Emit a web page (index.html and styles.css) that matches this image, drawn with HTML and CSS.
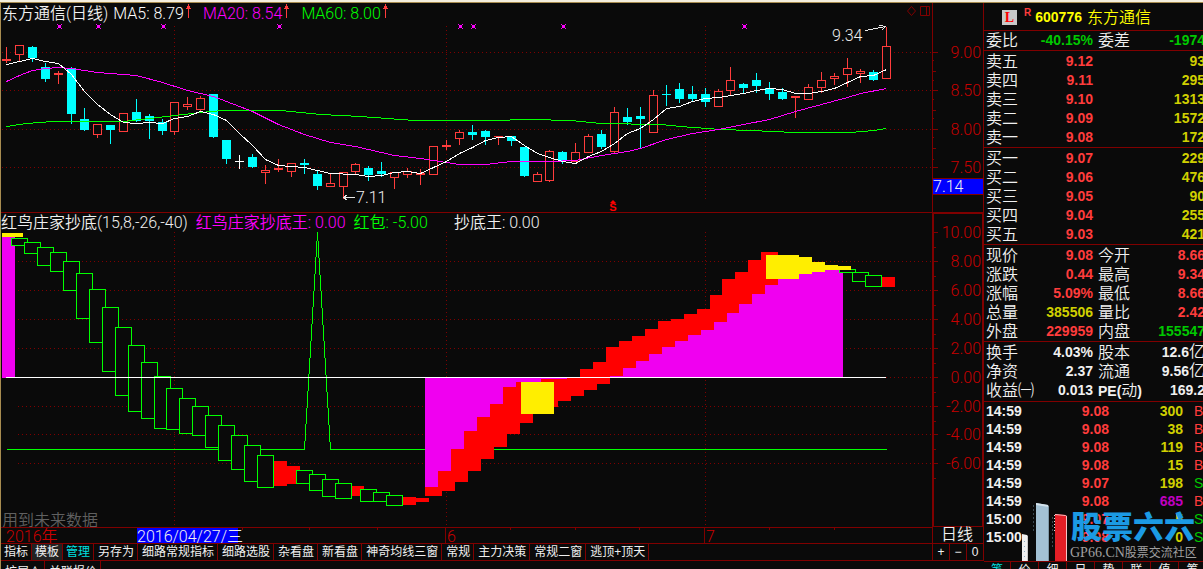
FILE: index.html
```html
<!DOCTYPE html>
<html lang="zh-CN">
<head>
<meta charset="utf-8">
<title>东方通信 600776</title>
<link rel="stylesheet" href="styles.css">
</head>
<body>
<div class="topstrip"></div>
<div class="workspace">
  <main class="charts">
    <section class="panel panel-price">
      <div class="plot">
        <header class="legend">
          <span class="legend-title">东方通信(日线)</span>
          <span class="white">MA5: 8.79<svg class="up" viewBox="0 0 7 16"><path d="M3 0h1v2h1v2h1v1H4v9H3V5H1V4h1V2h1z"/></svg></span>
          <span class="magenta">MA20: 8.54<svg class="up" viewBox="0 0 7 16"><path d="M3 0h1v2h1v2h1v1H4v9H3V5H1V4h1V2h1z"/></svg></span>
          <span class="green">MA60: 8.00<svg class="up" viewBox="0 0 7 16"><path d="M3 0h1v2h1v2h1v1H4v9H3V5H1V4h1V2h1z"/></svg></span>
          <svg class="tools" viewBox="0 0 24 12"><path d="M5.500 1.500l4 4.500-4 4.500-4-4.500zM14.500 1.500h9v9h-9zM20.500 1.500v9"/></svg>
        </header>
        <svg id="price" class="price" viewBox="1 23 931 189" preserveAspectRatio="none"></svg>
      </div>
      <svg id="price-axis" class="price-axis" viewBox="932 3 52 209"></svg>
    </section>
    <section class="panel panel-ind">
      <div class="plot">
        <header class="legend legend-ind">
          <span>红鸟庄家抄底(15,8,-26,-40)</span>
          <span class="magenta">红鸟庄家抄底王: 0.00</span>
          <span class="green">红包: -5.00</span>
          <span class="last">抄底王: 0.00</span>
        </header>
        <svg id="ind" class="ind" viewBox="1 232 931 295" preserveAspectRatio="none"></svg>
      </div>
      <svg id="ind-axis" class="ind-axis" viewBox="932 213 52 314"></svg>
    </section>
    <section class="panel panel-date">
      <svg id="dates" class="dates" viewBox="1 527 931 16" preserveAspectRatio="none"></svg>
      <button class="period">日线</button>
    </section>
    <section class="panel panel-tabs">
      <nav class="tabs">
        <button class="slim">指标</button><button class="slim on">模板</button><button class="slim cyan">管理</button><button>另存为</button><button>细路常规指标</button><button>细路选股</button><button>杂看盘</button><button>新看盘</button><button>神奇均线三窗</button><button>常规</button><button>主力决策</button><button>常规二窗</button><button>逃顶+顶天</button>
      </nav>
      <div class="zoomers"><button>+</button><button>−</button><button>0</button></div>
    </section>
    <nav class="tabs tabs-low"><button>扩展∧</button><button>关联报价</button></nav>
  </main>

  <aside class="side">
    <header class="stock">
      <span class="badge">L</span><span class="mark">R</span><b>600776</b><span>东方通信</span>
    </header>
    <table class="stats tight">
      <colgroup><col class="c1"><col class="c2"><col class="c3"><col></colgroup>
      <tr><th>委比</th><td class="gr">-40.15%</td><th>委差</th><td class="gr">-1974</td></tr>
    </table>
    <table class="book">
      <colgroup><col class="c1"><col class="c2"><col></colgroup>
      <tr><th>卖五</th><td class="rd">9.12</td><td class="yl">93</td></tr>
      <tr><th>卖四</th><td class="rd">9.11</td><td class="yl">295</td></tr>
      <tr><th>卖三</th><td class="rd">9.10</td><td class="yl">1313</td></tr>
      <tr><th>卖二</th><td class="rd">9.09</td><td class="yl">1572</td></tr>
      <tr><th>卖一</th><td class="rd">9.08</td><td class="yl">172</td></tr>
    </table>
    <table class="book">
      <colgroup><col class="c1"><col class="c2"><col></colgroup>
      <tr><th>买一</th><td class="rd">9.07</td><td class="yl">229</td></tr>
      <tr><th>买二</th><td class="rd">9.06</td><td class="yl">476</td></tr>
      <tr><th>买三</th><td class="rd">9.05</td><td class="yl">90</td></tr>
      <tr><th>买四</th><td class="rd">9.04</td><td class="yl">255</td></tr>
      <tr><th>买五</th><td class="rd">9.03</td><td class="yl">421</td></tr>
    </table>
    <table class="stats">
      <colgroup><col class="c1"><col class="c2"><col class="c3"><col></colgroup>
      <tr><th>现价</th><td class="rd">9.08</td><th>今开</th><td class="rd">8.66</td></tr>
      <tr><th>涨跌</th><td class="rd">0.44</td><th>最高</th><td class="rd">9.34</td></tr>
      <tr><th>涨幅</th><td class="rd">5.09%</td><th>最低</th><td class="rd">8.66</td></tr>
      <tr><th>总量</th><td class="yl">385506</td><th>量比</th><td class="rd">2.42</td></tr>
      <tr><th>外盘</th><td class="rd">229959</td><th>内盘</th><td class="gr">155547</td></tr>
    </table>
    <table class="stats roomy">
      <colgroup><col class="c1"><col class="c2"><col class="c3"><col></colgroup>
      <tr><th>换手</th><td>4.03%</td><th>股本</th><td>12.6<span class="cn">亿</span></td></tr>
      <tr><th>净资</th><td>2.37</td><th>流通</th><td>9.56<span class="cn">亿</span></td></tr>
      <tr><th>收益㈠</th><td>0.013</td><th><b class="pe">PE(</b>动<b class="pe">)</b></th><td>169.2</td></tr>
    </table>
    <div class="tape">
      <table class="trades">
        <colgroup><col class="t1"><col class="t2"><col class="t3"><col></colgroup>
        <tr><td>14:59</td><td class="rd">9.08</td><td class="yl">300</td><td class="rd">B</td></tr>
        <tr><td>14:59</td><td class="rd">9.08</td><td class="yl">38</td><td class="rd">B</td></tr>
        <tr><td>14:59</td><td class="rd">9.08</td><td class="yl">119</td><td class="rd">B</td></tr>
        <tr><td>14:59</td><td class="rd">9.08</td><td class="yl">15</td><td class="rd">B</td></tr>
        <tr><td>14:59</td><td class="rd">9.07</td><td class="yl">198</td><td class="gr">S</td></tr>
        <tr><td>14:59</td><td class="rd">9.08</td><td class="pp">685</td><td class="rd">B</td></tr>
        <tr><td>15:00</td><td class="rd">9.07</td><td class="yl">5</td><td class="gr">S</td></tr>
        <tr><td>15:00</td><td class="rd">9.08</td><td class="yl">0</td><td class="gr">S</td></tr>
      </table>
      <div class="brand">
        <svg class="brand-bars" viewBox="0 0 46 58">
          <path fill="#f0f0f0" d="M0 31l5 1v26H0z"/><path fill="#c9c9c9" d="M5 32l1 1v25H5z"/>
          <path fill="#a3c1d4" d="M14 0l12 2v56H14z"/><path fill="#d5e3ec" d="M14 0l12 2 1 2-13-2z"/><path fill="#7d98a8" d="M26 3l1 1v54h-1z"/>
          <path fill="#e31e26" d="M33 11l11 1v46H33z"/><path fill="#f7c3c5" d="M33 11l10 1 2 1v45h-1V13l-11-1z"/>
          <path stroke="#3c4a52" stroke-dasharray="2 2" d="M11.500 2v28M30.500 14v30"/><path stroke="#ddd" stroke-dasharray="1 2" d="M32.500 12v18"/>
          <path stroke="#8fb0c4" stroke-dasharray="1 4" d="M2.500 38v16"/>
        </svg>
        <div class="brand-text"><div class="brand-name">股票六六</div><div class="brand-url">GP66.CN<span>股票交流社区</span></div></div>
      </div>
    </div>
    <nav class="side-tabs"><button class="cyan">笔</button><button>价</button><button>细</button><button>日</button><button>势</button><button>联</button><button>值</button><button>筹</button></nav>
  </aside>
</div>
<script src="chart.js"></script>
</body>
</html>
```
FILE: styles.css
```css
* { box-sizing: border-box; }
html, body { height: 100%; margin: 0; }
body {
  overflow: hidden;
  background: #0a0a0a;
  color: #f0f0f0;
  font-family: "Liberation Sans", "Noto Sans CJK SC", sans-serif;
  font-size: 16px;
  line-height: 19px;
}
svg { display: block; }
button {
  margin: 0; padding: 0; border: 0; background: none; color: inherit;
  font: inherit; white-space: nowrap;
}
.topstrip { height: 3px; background: #f4efdf; border-bottom: 1px solid #a88c50; }
.workspace {
  display: grid;
  grid-template-columns: minmax(0, 1fr) 222px;
  margin-right: -3px;
  border-left: 1px solid #a88c50;
}

/* charts */
.panel { display: grid; grid-template-columns: minmax(0, 1fr) 52px; }
.plot { min-width: 0; }
.legend, svg text { font-family: Roboto, "Noto Sans CJK SC", sans-serif; font-weight: 350; }
.legend { display: flex; gap: 11px; height: 20px; padding: 1px 0 0 1px; white-space: nowrap; }
.legend span { display: flex; }
.legend .legend-title { margin-right: -6px; }
.legend-ind { gap: 8px; height: 19px; padding: 0; }
.legend-ind .last { margin-left: 18px; }
.up { width: 7px; height: 16px; margin-left: 1px; fill: #ff3c3c; }
.tools { width: 24px; height: 12px; margin: 1px 2px 0 auto; fill: none; stroke: #800000; }
.magenta { color: #f0f; }
.green { color: #0f0; }
.white { color: #fff; }
.price { width: 100%; height: 189px; }
.price-axis { width: 52px; height: 209px; }
.panel-ind { border-top: 1px solid #800000; }
.ind { width: 100%; height: 295px; }
.ind-axis { width: 52px; height: 314px; }
.dates { width: 100%; height: 16px; }
.period {
  height: 16px; line-height: 16px; padding-right: 2px; font-weight: 350;
  border: solid #800000; border-width: 0 1px;
}

.tabs, .zoomers {
  display: flex; height: 18px; border: solid #800000; border-width: 1px 0;
  font-size: 12px; line-height: 15px;
}
.tabs button { padding: 1px 3px 0 4px; border-right: 1px solid #800000; }
.tabs .slim { padding: 1px 3px 0; }
.tabs .on { background: #222; }
.tabs .cyan, .side-tabs .cyan { color: #00e0e0; }
.tabs-low { border-top: 0; }
.tabs-low button { line-height: 20px; }
.zoomers { border-left: 1px solid #800000; border-right: 1px solid #800000; }
.zoomers button { flex: 1; }
.zoomers button + button { border-left: 1px solid #800000; }

/* svg text */
svg text { font-size: 16px; fill: #f0f0f0; }
svg .axis-label, svg .year { fill: #c80000; }
svg .axis-label { text-anchor: end; }
svg .hint { fill: #606060; }
svg .signal { font: bold 11px "Liberation Sans", sans-serif; fill: #f00; text-anchor: middle; }

/* quote panel */
.side { white-space: nowrap; }
.stock {
  display: flex; align-items: center; height: 28px; padding: 1px 0 0 18px;
  border-bottom: 1px solid #800000; color: #ff0; font-weight: 350;
}
.badge {
  width: 15px; height: 15px; background: #c8c8c8; color: #f00; text-align: center;
  font: bold 14px/15px "Liberation Serif", serif;
}
.mark { margin: 0 4px 8px 7px; color: #ff3c3c; font-size: 10px; font-weight: bold; line-height: 12px; }
.stock b { margin-right: 5px; font-size: 14px; }
table {
  width: 100%; table-layout: fixed; border-collapse: separate; border-spacing: 0;
  border-bottom: 1px solid #800000; padding: 1px 1px 0 2px;
}
table.tight { padding-top: 0; }
table.roomy { padding-bottom: 1px; }
th, td { height: 19px; padding: 0; line-height: 19px; }
th { font-weight: 350; text-align: left; }
td { font-size: 14px; font-weight: bold; text-align: right; }
.c1 { width: 32px; }
.c2 { width: 75px; }
.c3 { width: 37px; }
.stats th + td + th { padding-left: 5px; }
.cn { font-size: 16px; font-weight: 350; line-height: 1px; }
.pe { font-size: 14px; font-weight: bold; line-height: 1px; }
.rd { color: #ff3c3c; }
.gr { color: #00c800; }
.yl { color: #d0d000; }
.pp { color: #c000c0; }
.tape { position: relative; padding-bottom: 15px; border-bottom: 1px solid #800000; }
.trades { border: 0; padding: 0 0 0 2px; }
.trades td { height: 18px; line-height: 18px; }
.trades td:first-child { text-align: left; }
.trades td:last-child { padding-left: 11px; text-align: left; font-weight: normal; }
.t1 { width: 60px; }
.t2 { width: 63px; }
.t3 { width: 74px; }
.brand { position: absolute; left: 38px; bottom: 0; display: flex; align-items: flex-end; }
.brand-bars { width: 46px; height: 58px; }
.brand-name { margin-left: 3px; color: #1b9ae4; font-size: 31px; font-weight: 900; line-height: 32px; }
.brand-url { margin-left: 2px; color: #a0a0a0; font: 14px/17px "Liberation Serif", serif; }
.brand-url span { font: 12px/12px "Noto Sans CJK SC", sans-serif; }
.side-tabs { display: flex; font-size: 12px; line-height: 17px; }
.side-tabs button { width: 28px; flex: none; border-right: 1px solid #800000; }
.side-tabs button:first-child { width: 27px; }
```
FILE: chart.js
```js
const RED = '#ff3c3c', CYAN = '#00ffff', LINE = '#800000', BG = '#0a0a0a';
const rect = (x, y, w, h, f) => `<rect x="${x}" y="${y}" width="${w}" height="${h}" fill="${f}"/>`;
const box = (x, y, w, h, s, f) => rect(x, y, w + 1, h + 1, s) + rect(x + 1, y + 1, w - 1, h - 1, f);
const crisp = s => `<g shape-rendering="crispEdges">${s}</g>`;
const stroke = (pts, c) =>
  `<polyline transform="translate(.5 .5)" points="${pts}" fill="none" stroke="${c}" shape-rendering="crispEdges"/>`;
const text = (x, y, t, c = '') => `<text x="${x}" y="${y}" class="${c}">${t}</text>`;
const hdots = (y, x1, x2) => `<path d="M${x1} ${y}.5H${x2}" stroke="${LINE}" stroke-dasharray="1 3"/>`;
const vdots = (x, y1, y2) => `<path d="M${x}.5 ${y1}V${y2}" stroke="${LINE}" stroke-dasharray="1 3"/>`;
const put = (id, s) => { document.getElementById(id).innerHTML = s; };

/* x, colour, body top, body bottom, high, low */
const candles = `6 R 59 60 47 62|19 r 45 54 45 61|32 c 47 57 46 61|45 c 67 78 63 81|58 R 73 74 71 83|71 c 68 113 67 123
84 c 119 129 108 130|97 r 124 134 124 137|110 c 125 129 125 143|123 r 113 131 113 131|136 c 112 120 99 121|149 c 116 120 114 138
162 c 122 130 119 134|174 r 102 131 102 134|187 r 104 106 97 109|200 r 98 109 96 110|213 c 94 136 94 137|226 c 140 158 140 163
239 w 161 161 155 168|252 c 157 166 154 167|265 r 170 172 165 183|278 R 168 169 159 171|291 r 163 171 163 176|304 c 163 164 159 173
317 c 174 185 171 189|330 r 183 186 173 186|343 r 172 186 172 198|355 r 164 171 163 173|368 c 168 174 166 180|381 c 171 173 162 176
394 r 172 177 172 188|407 r 171 174 168 177|420 R 173 174 169 184|433 r 146 174 146 174|446 R 145 146 140 149|459 r 132 138 130 144
472 c 132 134 125 139|485 c 131 136 130 144|498 R 136 136 136 144|511 c 136 140 136 145|524 c 147 175 147 176|537 r 174 181 172 181
549 r 151 180 150 181|562 c 152 160 151 163|575 r 152 161 143 161|588 r 136 152 134 152|601 c 134 146 130 148|614 r 112 151 107 153
627 c 117 121 108 124|640 c 116 118 107 148|653 r 95 132 90 132|666 c 94 94 85 105|679 c 89 98 83 102|692 c 94 98 86 101
705 c 94 101 88 106|718 r 91 106 89 106|730 r 80 90 67 95|743 c 84 87 83 92|756 c 80 85 73 92|769 c 88 93 82 99
782 c 92 98 88 99|795 R 96 97 96 117|808 r 87 99 84 99|821 r 80 87 72 92|834 r 76 78 73 84|847 r 68 74 58 86
860 r 71 73 69 82|873 c 72 79 70 80|886 r 46 78 27 78`.split(/[|\n]/).map(s => s.trim().split(' '));

let s = '';
[52, 90, 129, 167].forEach(y => { s += hdots(y, 2, 932); });
[174, 446, 705].forEach(x => { s += vdots(x, 26, 200); });
candles.forEach(([x, k, t, b, h, l]) => {
  [x, t, b, h, l] = [x, t, b, h, l].map(Number);
  const c = k === 'c' ? CYAN : k === 'w' ? '#fff' : RED;
  s += rect(x, h, 1, l - h + 1, c);
  s += k === 'r' ? box(x - 4, t, 8, b - t, c, BG) : rect(x - 4, t, 9, b - t + 1, c);
});
[59, 98, 163, 279, 460, 473, 563, 744].forEach(x => {
  s += rect(x - 1, 25, 3, 3, '#f0f');
  [[-2, 24], [2, 24], [-2, 28], [2, 28]].forEach(([d, y]) => { s += rect(x + d, y, 1, 1, '#f0f'); });
});
s = crisp(s);
s += stroke('6,126 26,123 52,121 123,121 149,118 200,112 222,110 280,110 320,114 360,116 414,120 490,120 530,119 570,120 600,123 660,124 680,126 720,129 750,130 795,132 850,132 873,130 886,128', '#0f0');
s += stroke('6,81 19,75 32,70 45,68 58,67 71,68 97,72 136,75 162,82 187,90 213,96 226,101 252,111 278,124 304,134 330,142 355,146 394,155 420,158 446,162 459,164 485,164 511,161 549,161 575,160 601,155 627,151 640,148 666,139 692,133 718,129 743,124 769,119 795,111 821,104 847,97 860,93 886,88', '#f0f');
s += stroke('6,64 32,58 45,61 58,63 71,74 84,91 97,104 110,114 123,122 136,123 149,122 162,123 174,118 187,116 200,111 213,114 226,120 239,133 252,145 265,159 278,165 304,167 317,170 330,173 355,174 368,176 381,175 394,172 407,171 420,173 433,167 446,161 459,153 472,147 485,140 498,137 511,136 524,145 537,153 549,157 562,161 575,163 588,156 601,151 614,143 627,133 640,128 653,119 666,108 679,106 692,101 705,98 718,97 743,93 756,90 769,88 782,89 795,93 808,93 821,91 834,88 847,82 860,76 873,75 886,69', '#fff');
s += stroke('354,197 343,197', '#e8e8e8') + stroke('347,194 343,197 347,200', '#e8e8e8') + text(356, 203, '7.11');
s += stroke('865,30 885,26', '#e8e8e8') + stroke('879,25 885,26 881,30', '#e8e8e8') + text(832, 41, '9.34');
s += `<path d="M610 203l3-3 3 3z" fill="#f00"/>` + text(613, 211, 'S', 'signal');
put('price', s);

s = rect(932, 3, 1, 209, LINE) + rect(983, 3, 1, 209, LINE);
[52, 90, 129, 167].forEach(y => { s += rect(933, y, 5, 1, LINE); });
[71, 110, 148].forEach(y => { s += rect(933, y, 3, 1, LINE); });
[60, 80, 99, 118, 137, 159].forEach(y => { s += rect(933, y, 1, 1, LINE); });
s += rect(933, 178, 50, 17, LINE) + rect(933, 179, 50, 15, '#00f');
s = crisp(s);
[['9.00', 58], ['8.50', 96], ['8.00', 135], ['7.50', 173]].forEach(([t, y]) => { s += text(981, y, t, 'axis-label'); });
put('price-axis', s + text(933, 192, '7.14'));

/* indicator pane */
s = '';
[261, 290, 319, 348, 377, 406, 434, 463].forEach(y => { s += hdots(y, 18, 932); });
[174, 446, 705].forEach(x => { s += vdots(x, 232, 525); });
s = crisp(s) + stroke('6,449 304,449 317,232 330,449 886,449', '#0f0');
let g = rect(2, 237, 13, 141, '#f000f0');
/* each entry: g = outlined box x top bottom, r = solid x1 x2 top bottom */
const steps = `g 11 238 245|g 24 242 253|g 37 247 265|g 50 252 271|g 63 261 290|g 76 273 318|g 89 289 342|g 102 307 371|g 115 327 395
g 128 345 411|g 141 362 418|g 154 376 428|g 166 388 429|g 179 398 433|g 192 406 435|g 205 415 447|g 218 425 460|g 231 435 469
g 244 445 481|g 257 455 487|r 274 287 461 486|r 287 300 466 484|g 296 470 483|g 309 474 490|g 322 479 496|g 335 483 498
r 352 364 486 496|g 360 489 501|g 373 492 501|g 386 495 505|r 403 416 497 505|r 416 429 498 502`.split(/[|\n]/);
const draw = list => list.forEach(e => {
  const [k, ...n] = e.trim().split(' ');
  const v = n.map(Number);
  g += k === 'g' ? box(v[0], v[1], 16, v[2] - v[1], '#0f0', BG) : rect(v[0], v[2], v[1] - v[0], v[3] - v[2], '#f00');
});
draw(steps);
g += rect(2, 233, 21, 4, '#ffee00');
/* red band below zero, then above zero: x1 x2 top bottom */
draw(`r 425 442 480 496|r 438 455 471 491|r 451 468 449 482|r 464 481 431 471|r 477 494 417 459|r 490 507 404 447|r 503 520 387 434
r 516 533 382 423|r 533 558 379 407|r 555 571 378 401|r 567 584 378 396|r 580 597 369 390|r 593 610 362 384|r 606 623 347 378
r 619 636 341 378|r 632 649 336 378|r 645 662 329 378|r 658 675 321 378|r 671 688 319 378|r 684 701 314 378|r 697 714 309 378
r 710 726 295 378|r 722 739 279 378|r 735 752 272 378|r 748 765 260 378|r 761 778 252 378`.split(/[|\n]/));
[[425, 438, 487], [438, 451, 471], [451, 464, 449], [464, 477, 431], [477, 490, 417], [490, 503, 404], [503, 516, 387],
 [516, 541, 382], [541, 567, 379]].forEach(([a, b, y]) => { g += rect(a, 378, b - a, y - 378, '#f000f0'); });
[[610, 376], [623, 368], [636, 361], [649, 354], [662, 347], [675, 341], [688, 335], [701, 330], [714, 322], [727, 313],
 [739, 304], [752, 294], [765, 285], [778, 279], [799, 274], [812, 272], [825, 270], [843, 0]].forEach(([x, y], i, a) => {
  if (a[i + 1]) g += rect(x, y, a[i + 1][0] - x, 378 - y, '#f000f0');
});
draw(['g 839 269 272', 'g 852 272 281', 'g 865 275 286', 'r 882 895 277 287']);
g += rect(839, 273, 4, 104, '#f000f0');
[[521, 382, 33, 32], [766, 255, 33, 24], [799, 257, 13, 17], [812, 262, 13, 10], [825, 265, 13, 5], [838, 266, 13, 4]]
  .forEach(r => { g += rect(...r, '#ffee00'); });
g += rect(6, 377, 880, 1, '#fff');
put('ind', s + crisp(g) + text(2, 526, '用到未来数据', 'hint'));

s = rect(932, 213, 2, 314, LINE) + rect(982, 213, 2, 314, LINE) + rect(932, 213, 52, 1, LINE) + rect(932, 526, 52, 1, LINE);
const labels = ['10.00', '8.00', '6.00', '4.00', '2.00', '0.00', '-2.00', '-4.00', '-6.00'];
const ys = [232, 261, 290, 319, 348, 377, 406, 434, 463];
let t = '';
ys.forEach((y, i) => {
  s += rect(934, y, 4, 1, LINE) + rect(934, y + 15, 2, 1, LINE);
  t += text(981, y + 6, labels[i], 'axis-label');
});
put('ind-axis', crisp(s) + t);

/* date axis */
s = rect(1, 527, 931, 1, LINE);
[242, 309, 377, 510, 575, 639, 769, 834].forEach(x => { s += rect(x, 528, 1, 2, LINE); });
s += rect(445, 528, 1, 15, LINE) + rect(704, 528, 1, 15, LINE) + rect(137, 528, 101, 15, '#00f');
put('dates', crisp(s) + text(6, 542, '2016年', 'year') + text(137, 542, '2016/04/27/三') + text(447, 542, '6', 'year') + text(706, 542, '7', 'year'));
```
